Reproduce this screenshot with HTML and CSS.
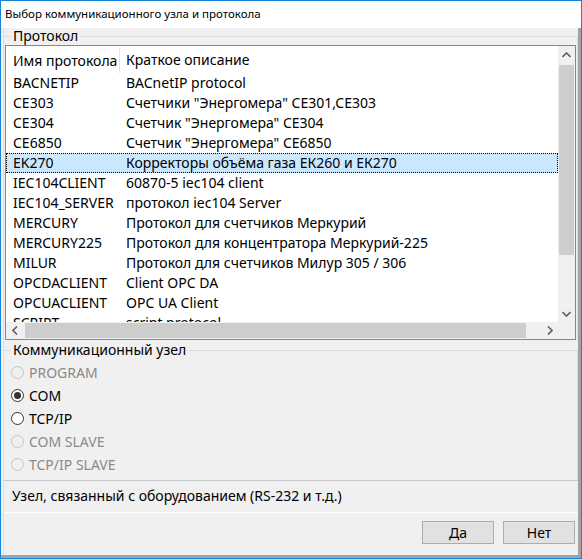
FILE: index.html
```html
<!DOCTYPE html>
<html>
<head>
<meta charset="utf-8">
<link rel="stylesheet" href="styles.css">
</head>
<body>
<div class="window">
  <div class="titlebar">Выбор коммуникационного узла и протокола</div>
  <div class="client">
    <div class="inner">
      <fieldset class="group g1">
        <legend>Протокол</legend>
        <div class="listbox">
          <div class="lb-main">
            <div class="lb-view">
              <div class="lb-header"><div class="c1 hc1">Имя протокола</div><div class="c2">Краткое описание</div></div>
              <div class="row"><div class="c1">BACNETIP</div><div class="c2">BACnetIP protocol</div></div>
              <div class="row"><div class="c1">CE303</div><div class="c2">Счетчики "Энергомера" CE301,CE303</div></div>
              <div class="row"><div class="c1">CE304</div><div class="c2">Счетчик "Энергомера" CE304</div></div>
              <div class="row"><div class="c1">CE6850</div><div class="c2">Счетчик "Энергомера" CE6850</div></div>
              <div class="row selected"><div class="c1">EK270</div><div class="c2">Корректоры объёма газа ЕК260 и ЕК270</div></div>
              <div class="row"><div class="c1">IEC104CLIENT</div><div class="c2">60870-5 iec104 client</div></div>
              <div class="row"><div class="c1">IEC104_SERVER</div><div class="c2">протокол iec104 Server</div></div>
              <div class="row"><div class="c1">MERCURY</div><div class="c2">Протокол для счетчиков Меркурий</div></div>
              <div class="row"><div class="c1">MERCURY225</div><div class="c2">Протокол для концентратора Меркурий-225</div></div>
              <div class="row"><div class="c1">MILUR</div><div class="c2">Протокол для счетчиков Милур 305 / 306</div></div>
              <div class="row"><div class="c1">OPCDACLIENT</div><div class="c2">Client OPC DA</div></div>
              <div class="row"><div class="c1">OPCUACLIENT</div><div class="c2">OPC UA Client</div></div>
              <div class="row"><div class="c1">SCRIPT</div><div class="c2">script protocol</div></div>
            </div>
            <div class="vscroll">
              <div class="arrow"><svg width="9" height="6" viewBox="0 0 9 6"><path d="M0.5 5 L4.5 1 L8.5 5" fill="none" stroke="#606060" stroke-width="1.6"/></svg></div>
              <div class="vtrack"><div class="vthumb"></div></div>
              <div class="arrow"><svg width="9" height="6" viewBox="0 0 9 6"><path d="M0.5 1 L4.5 5 L8.5 1" fill="none" stroke="#606060" stroke-width="1.6"/></svg></div>
            </div>
          </div>
          <div class="hbar">
            <div class="hscroll">
              <div class="harrow"><svg width="6" height="9" viewBox="0 0 6 9"><path d="M5 0.5 L1 4.5 L5 8.5" fill="none" stroke="#606060" stroke-width="1.6"/></svg></div>
              <div class="htrack"><div class="hthumb"></div></div>
              <div class="harrow"><svg width="6" height="9" viewBox="0 0 6 9"><path d="M1 0.5 L5 4.5 L1 8.5" fill="none" stroke="#606060" stroke-width="1.6"/></svg></div>
            </div>
            <div class="corner"></div>
          </div>
        </div>
      </fieldset>
      <fieldset class="group g2">
        <legend>Коммуникационный узел</legend>
        <div class="radios">
          <div class="radio disabled"><span class="dot"></span><span>PROGRAM</span></div>
          <div class="radio checked"><span class="dot"></span><span>COM</span></div>
          <div class="radio"><span class="dot"></span><span>TCP/IP</span></div>
          <div class="radio disabled"><span class="dot"></span><span>COM SLAVE</span></div>
          <div class="radio disabled"><span class="dot"></span><span>TCP/IP SLAVE</span></div>
        </div>
      </fieldset>
      <div class="status">Узел, связанный с оборудованием (RS-232 и т.д.)</div>
      <div class="buttons">
        <div class="btn">Да</div>
        <div class="btn">Нет</div>
      </div>
    </div>
  </div>
</div>
</body>
</html>
```

FILE: styles.css
```css
* { box-sizing: border-box; }
html, body { margin: 0; padding: 0; background: #ffffff; }
body { font-family: "Noto Sans", "Open Sans", sans-serif; color: #000; }

.window {
  width: 582px;
  height: 559px;
  border: 1px solid #1883d7;
  display: flex;
  flex-direction: column;
  background: #ffffff;
}

.titlebar {
  height: 27px;
  flex: none;
  font-size: 11.5px;
  line-height: 26px;
  padding-left: 4px;
  background: #ffffff;
  color: #000;
}

.client {
  flex: 1;
  background: #f0f0f0;
  border-right: 3px solid #a3a3a3;
  border-bottom: 3px solid #a3a3a3;
  padding-left: 2px;
}

.inner {
  height: 100%;
  border-left: 1px solid #dcdcdc;
  display: flex;
  flex-direction: column;
  font-size: 14px;
}

.group {
  margin: 0;
  padding: 0;
  border: none;
  border-top: 1px solid #dcdcdc;
  border-right: 1px solid #dcdcdc;
  min-width: 0;
}
.group legend {
  margin-left: 7px;
  padding: 0 2px;
  font-size: 14px;
  line-height: 15px;
  height: 16px;
}

.g1 { flex: none; padding-right: 0; }

.listbox {
  margin: 1px 0 0 1px;
  width: 571px;
  height: 295px;
  border: 1px solid #828790;
  background: #ffffff;
  display: flex;
  flex-direction: column;
}

.lb-main { display: flex; height: 276px; }
.lb-view { width: 552px; height: 276px; overflow: hidden; }

.lb-header { display: flex; height: 27px; align-items: stretch; }
.lb-header .c1, .lb-header .c2 { line-height: 27px; }
.hc1 { border-right: 1px solid #e5e5e5; margin: 2px 0 0; line-height: 25px !important; }

.c1 { width: 114px; flex: none; padding-left: 7px; white-space: nowrap; }
.c2 { padding-left: 6px; white-space: nowrap; }

.row { display: flex; height: 20px; line-height: 20px; }
.row.selected {
  background: #cce8ff;
  outline: 1px dotted #000;
  outline-offset: -1px;
}

.vscroll {
  width: 17px;
  background: #f0f0f0;
  display: flex;
  flex-direction: column;
}
.arrow { height: 17px; display: flex; align-items: center; justify-content: center; }
.vtrack { flex: 1; padding: 2px 1px 0; }
.vthumb { height: 190px; background: #cdcdcd; }

.hbar { display: flex; height: 17px; }
.hscroll { width: 552px; display: flex; background: #f0f0f0; }
.harrow { width: 17px; display: flex; align-items: center; justify-content: center; }
.htrack { flex: 1; padding: 1px 0 1px 2px; }
.hthumb { width: 501px; height: 15px; background: #cdcdcd; }
.corner { width: 17px; background: #f0f0f0; }

.g2 { margin-top: 2px; height: 138px; flex: none; }

.radios { padding-top: 3px; }
.radio {
  height: 23px;
  display: flex;
  align-items: center;
  padding-left: 7px;
  gap: 5px;
}
.radio .dot {
  width: 13px;
  height: 13px;
  border-radius: 50%;
  border: 1px solid #333333;
  background: #ffffff;
  position: relative;
  flex: none;
}
.radio.checked .dot::after {
  content: "";
  position: absolute;
  left: 2px;
  top: 2px;
  width: 7px;
  height: 7px;
  border-radius: 50%;
  background: #333333;
}
.radio.disabled { color: #8a8a8a; }
.radio.disabled .dot { border-color: #c4c4c4; background: #f0f0f0; }

.status {
  height: 33px;
  flex: none;
  border-top: 1px solid #c8c8c8;
  border-bottom: 1px solid #ffffff;
  padding-left: 8px;
  line-height: 29px;
}

.buttons {
  flex: 1;
  display: flex;
  justify-content: flex-end;
  gap: 9px;
  padding: 8px 3px 0 0;
}
.btn {
  width: 72px;
  height: 23px;
  border: 1px solid #adadad;
  background: #e1e1e1;
  text-align: center;
  line-height: 21px;
}
```
